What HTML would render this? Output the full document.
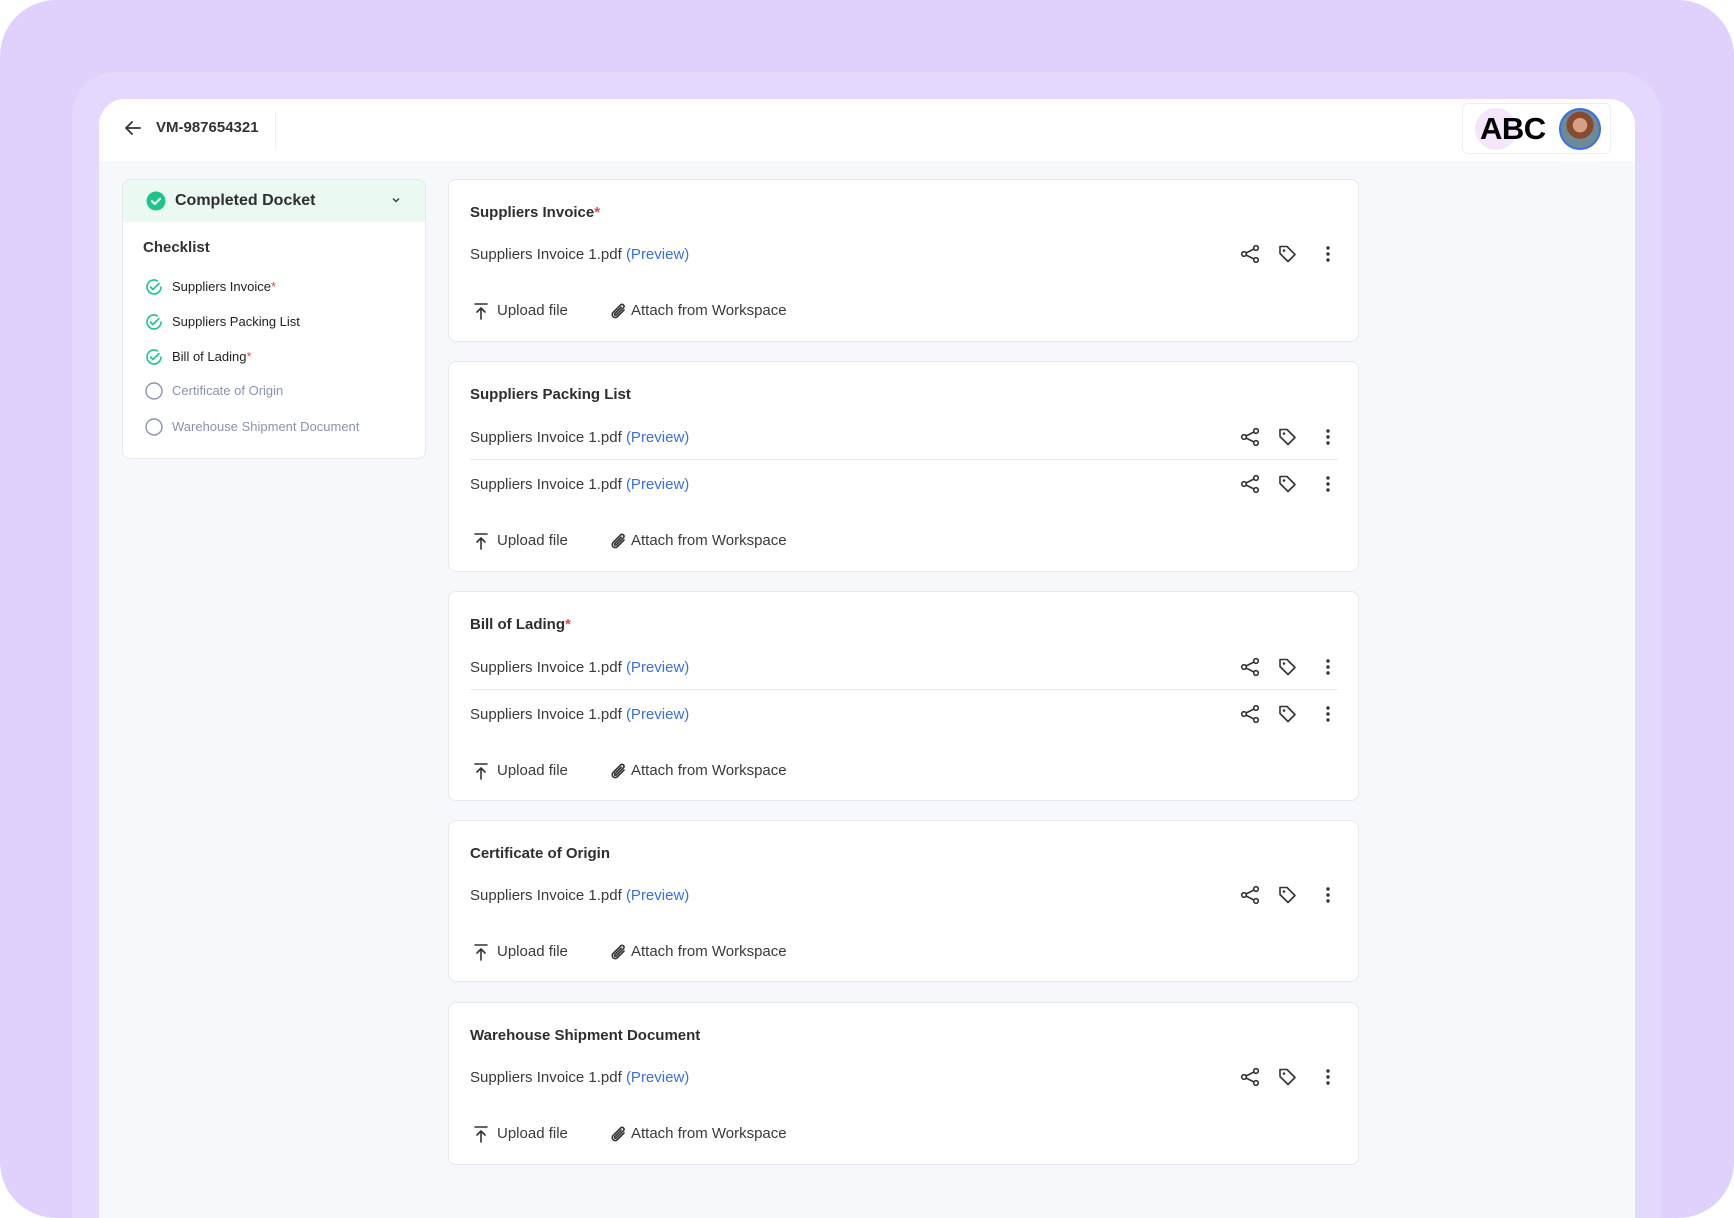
<!DOCTYPE html>
<html><head><meta charset="utf-8"><style>
*{margin:0;padding:0;box-sizing:border-box}
html,body{width:1734px;height:1218px;overflow:hidden}
body{background:#fff;font-family:"Liberation Sans",sans-serif;position:relative;color:#2b2b2b}
.bg{position:absolute;left:0;top:0;width:1734px;height:1218px;background:#e0d1fc;border-radius:56px}
.frame{position:absolute;left:72px;top:72px;width:1589px;height:1146px;background:#e4d8fd;border-radius:44px 44px 0 0}
.panel{position:absolute;left:99px;top:99px;width:1536px;height:1119px;background:#f7f8fc;border-radius:26px 26px 0 0;overflow:hidden}
.hdr{position:absolute;left:0;top:0;width:1536px;height:62px;background:#fff}
.abs{position:absolute}
.card{position:absolute;left:349px;width:911px;background:#fff;border:1px solid #e5e8ee;border-radius:8px}
.t{position:absolute;left:21px;font-size:15px;font-weight:bold;color:#2e2e2e;line-height:20px}
.row{position:absolute;left:21px;font-size:15px;color:#3a3a3a;line-height:20px}
.row span{color:#3b6fe0}
.req{color:#e5484d}
.div{position:absolute;left:21px;right:20px;height:1px;background:#e6e8ef}
.si{position:absolute;left:49px;font-size:13px;line-height:18px;color:#222}
.si.g{color:#8a93ad}
.icons{position:absolute;left:790px;width:100px;height:22px}
.up{position:absolute;left:20px;width:320px;height:22px;font-size:15px;color:#3a3a3a;line-height:22px}
</style></head><body>
<div class="bg"></div>
<div class="frame"></div>
<svg width="0" height="0" style="position:absolute">
 <defs>
  <g id="ics">
   <g fill="none" stroke="#333" stroke-width="1.6">
    <circle cx="17" cy="5" r="2.3"/><circle cx="5" cy="11" r="2.3"/><circle cx="17" cy="17" r="2.3"/>
    <path d="M7 10L15 6M7 12L15 16"/>
    <path d="M41 3.5h7l8 8-7 7-8-8z" stroke-linejoin="round"/>
   </g>
   <circle cx="45" cy="7.5" r="1.3" fill="#333"/>
   <circle cx="89" cy="5" r="1.7" fill="#333"/><circle cx="89" cy="11" r="1.7" fill="#333"/><circle cx="89" cy="17" r="1.7" fill="#333"/>
  </g>
  <g id="upl">
   <g fill="none" stroke="#333" stroke-width="1.6" stroke-linecap="round" stroke-linejoin="round">
    <path d="M6 4h12M12 19V8M8 12l4-4 4 4"/>
    <path d="M155 10l-7 7a3 3 0 0 1-4.2-4.2l8-8a2 2 0 0 1 2.8 2.8l-7.5 7.5a1 1 0 0 1-1.4-1.4l6.5-6.5"/>
   </g>
  </g>
 </defs>
</svg>
<div class="panel">
 <div class="hdr">
  <svg class="abs" style="left:24px;top:19px" width="20" height="20" viewBox="0 0 20 20"><path d="M17 10H3M9 4L3 10l6 6" fill="none" stroke="#333" stroke-width="1.8" stroke-linecap="round" stroke-linejoin="round"/></svg>
  <div class="abs" style="left:57px;top:19px;font-size:15px;font-weight:bold;color:#333;line-height:20px">VM-987654321</div>
  <div class="abs" style="left:176px;top:12px;width:1px;height:38px;background:#eceef2"></div>
  <div class="abs" style="left:1363px;top:4px;width:149px;height:51px;border:1px solid #eceef3;border-radius:6px;background:#fff">
   <div class="abs" style="left:12px;top:4px;width:42px;height:42px;border-radius:50%;background:#f5e6fb"></div>
   <div class="abs" style="left:17px;top:9px;font-size:31px;font-weight:bold;color:#000;line-height:32px;letter-spacing:-0.5px">ABC</div>
   <div class="abs" style="left:96px;top:4px;width:42px;height:42px;border-radius:50%;border:2px solid #3b6fe0;background:radial-gradient(circle at 50% 40%,#d8a088 0 24%,#8a4a2e 25% 45%,#6e8a96 46%)"></div>
  </div>
 </div>
 <div class="abs" style="left:23px;top:80px;width:304px;height:280px;background:#fff;border:1px solid #e5e8ee;border-radius:8px;overflow:hidden">
  <div class="abs" style="left:0;top:0;width:304px;height:42px;background:#eafaf3"></div>
  <svg class="abs" style="left:23px;top:11px" width="20" height="20" viewBox="0 0 20 20"><circle cx="10" cy="10" r="9.5" fill="#1fc48a"/><path d="M6 10.2l2.8 2.8L14 7.8" fill="none" stroke="#fff" stroke-width="2" stroke-linecap="round" stroke-linejoin="round"/></svg>
  <div class="abs" style="left:52px;top:11px;font-size:16px;font-weight:bold;color:#2e2e2e;line-height:20px">Completed Docket</div>
  <svg class="abs" style="left:268px;top:16px" width="10" height="8" viewBox="0 0 10 8"><path d="M2 2.5l3 3 3-3" fill="none" stroke="#444" stroke-width="1.5"/></svg>
  <div class="abs" style="left:20px;top:58px;font-size:15px;font-weight:bold;color:#333;line-height:20px">Checklist</div>
  <svg class="abs" style="left:22px;top:98px" width="18" height="18" viewBox="0 0 18 18"><path d="M16 9A7 7 0 1 1 12.5 2.9" fill="none" stroke="#1fc48a" stroke-width="1.6" stroke-linecap="round"/><path d="M5.5 9l2.5 2.5 6-6" fill="none" stroke="#1fc48a" stroke-width="1.6" stroke-linecap="round" stroke-linejoin="round"/></svg>
  <div class="si" style="top:98px">Suppliers Invoice<span class="req">*</span></div>
  <svg class="abs" style="left:22px;top:133px" width="18" height="18" viewBox="0 0 18 18"><path d="M16 9A7 7 0 1 1 12.5 2.9" fill="none" stroke="#1fc48a" stroke-width="1.6" stroke-linecap="round"/><path d="M5.5 9l2.5 2.5 6-6" fill="none" stroke="#1fc48a" stroke-width="1.6" stroke-linecap="round" stroke-linejoin="round"/></svg>
  <div class="si" style="top:133px">Suppliers Packing List</div>
  <svg class="abs" style="left:22px;top:168px" width="18" height="18" viewBox="0 0 18 18"><path d="M16 9A7 7 0 1 1 12.5 2.9" fill="none" stroke="#1fc48a" stroke-width="1.6" stroke-linecap="round"/><path d="M5.5 9l2.5 2.5 6-6" fill="none" stroke="#1fc48a" stroke-width="1.6" stroke-linecap="round" stroke-linejoin="round"/></svg>
  <div class="si" style="top:168px">Bill of Lading<span class="req">*</span></div>
  <svg class="abs" style="left:22px;top:202px" width="18" height="18" viewBox="0 0 18 18"><circle cx="9" cy="9" r="8" fill="none" stroke="#8a93ad" stroke-width="1.4"/></svg>
  <div class="si g" style="top:202px">Certificate of Origin</div>
  <svg class="abs" style="left:22px;top:238px" width="18" height="18" viewBox="0 0 18 18"><circle cx="9" cy="9" r="8" fill="none" stroke="#8a93ad" stroke-width="1.4"/></svg>
  <div class="si g" style="top:238px">Warehouse Shipment Document</div>
 </div>

 <div class="card" style="top:80px;height:163px">
  <div class="t" style="top:23px">Suppliers Invoice<span class="req">*</span></div>
  <div class="row" style="top:65px">Suppliers Invoice 1.pdf <span>(Preview)</span></div>
  <svg class="icons" style="top:63px" viewBox="0 0 100 22"><use href="#ics"/></svg>
  <div class="up" style="top:120px"><svg class="abs" style="left:0;top:0" width="170" height="22" viewBox="0 0 170 22"><use href="#upl"/></svg><span class="abs" style="left:28px">Upload file</span><span class="abs" style="left:162px">Attach from Workspace</span></div>
 </div>

 <div class="card" style="top:262px;height:211px">
  <div class="t" style="top:23px">Suppliers Packing List</div>
  <div class="row" style="top:66px">Suppliers Invoice 1.pdf <span>(Preview)</span></div>
  <svg class="icons" style="top:64px" viewBox="0 0 100 22"><use href="#ics"/></svg>
  <div class="div" style="top:97px"></div>
  <div class="row" style="top:113px">Suppliers Invoice 1.pdf <span>(Preview)</span></div>
  <svg class="icons" style="top:111px" viewBox="0 0 100 22"><use href="#ics"/></svg>
  <div class="up" style="top:168px"><svg class="abs" style="left:0;top:0" width="170" height="22" viewBox="0 0 170 22"><use href="#upl"/></svg><span class="abs" style="left:28px">Upload file</span><span class="abs" style="left:162px">Attach from Workspace</span></div>
 </div>

 <div class="card" style="top:492px;height:210px">
  <div class="t" style="top:23px">Bill of Lading<span class="req">*</span></div>
  <div class="row" style="top:66px">Suppliers Invoice 1.pdf <span>(Preview)</span></div>
  <svg class="icons" style="top:64px" viewBox="0 0 100 22"><use href="#ics"/></svg>
  <div class="div" style="top:97px"></div>
  <div class="row" style="top:113px">Suppliers Invoice 1.pdf <span>(Preview)</span></div>
  <svg class="icons" style="top:111px" viewBox="0 0 100 22"><use href="#ics"/></svg>
  <div class="up" style="top:168px"><svg class="abs" style="left:0;top:0" width="170" height="22" viewBox="0 0 170 22"><use href="#upl"/></svg><span class="abs" style="left:28px">Upload file</span><span class="abs" style="left:162px">Attach from Workspace</span></div>
 </div>

 <div class="card" style="top:721px;height:162px">
  <div class="t" style="top:23px">Certificate of Origin</div>
  <div class="row" style="top:65px">Suppliers Invoice 1.pdf <span>(Preview)</span></div>
  <svg class="icons" style="top:63px" viewBox="0 0 100 22"><use href="#ics"/></svg>
  <div class="up" style="top:120px"><svg class="abs" style="left:0;top:0" width="170" height="22" viewBox="0 0 170 22"><use href="#upl"/></svg><span class="abs" style="left:28px">Upload file</span><span class="abs" style="left:162px">Attach from Workspace</span></div>
 </div>

 <div class="card" style="top:903px;height:163px">
  <div class="t" style="top:23px">Warehouse Shipment Document</div>
  <div class="row" style="top:65px">Suppliers Invoice 1.pdf <span>(Preview)</span></div>
  <svg class="icons" style="top:63px" viewBox="0 0 100 22"><use href="#ics"/></svg>
  <div class="up" style="top:120px"><svg class="abs" style="left:0;top:0" width="170" height="22" viewBox="0 0 170 22"><use href="#upl"/></svg><span class="abs" style="left:28px">Upload file</span><span class="abs" style="left:162px">Attach from Workspace</span></div>
 </div>
</div>
</body></html>
